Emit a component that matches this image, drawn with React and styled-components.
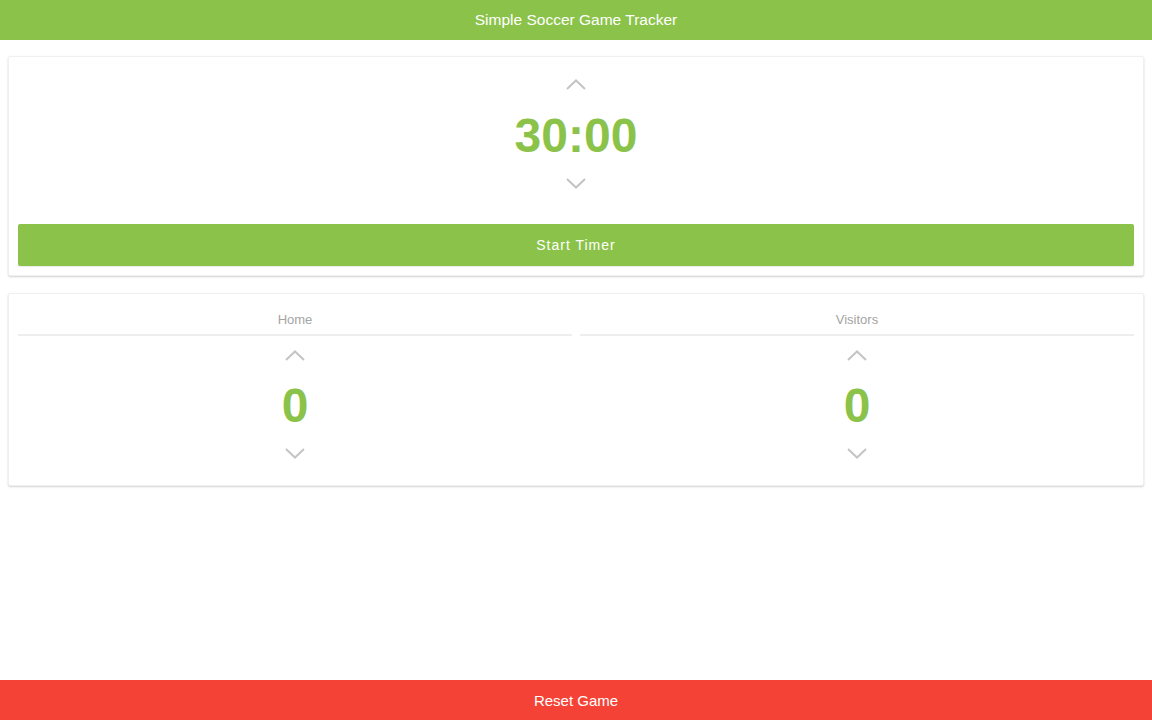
import React, { useState } from 'react';
import styled, { createGlobalStyle } from 'styled-components';

const GlobalStyle = createGlobalStyle`
  html, body {
    margin: 0;
    padding: 0;
    background: #fff;
    font-family: "Liberation Sans", Arial, sans-serif;
  }
`;

const Page = styled.div`
  display: flex;
  flex-direction: column;
  height: 720px;
  width: 1152px;
`;

const Header = styled.div`
  height: 40px;
  background-color: #8bc34a;
  color: #fff;
  display: flex;
  align-items: center;
  justify-content: center;
  font-size: 15.5px;
`;

const Content = styled.div`
  flex: 1;
  padding: 16px 8px 0;
  display: flex;
  flex-direction: column;
  gap: 17px;
`;

const Card = styled.div`
  background: #fff;
  border: 1px solid #f0f0f0;
  border-radius: 2px;
  box-shadow: 0 1px 2px rgba(0, 0, 0, 0.18);
  padding: 7px 9px ${props => props.bottom || 8}px;
`;

const ChevronButton = styled.div`
  height: ${props => props.h}px;
  display: flex;
  align-items: center;
  justify-content: center;
  cursor: pointer;
`;

const BigNumber = styled.div`
  color: #8bc34a;
  font-weight: bold;
  font-size: 48px;
  line-height: 64px;
  text-align: center;
`;

const StartButton = styled.button`
  display: block;
  width: 100%;
  height: 42px;
  margin-top: 26px;
  border: none;
  border-radius: 2px;
  background-color: #8bc34a;
  color: #fff;
  font-family: "Liberation Sans", Arial, sans-serif;
  font-size: 14px;
  letter-spacing: 1px;
  box-shadow: 0 1px 1px rgba(0, 0, 0, 0.08);
  cursor: pointer;
`;

const ScoreGrid = styled.div`
  display: grid;
  grid-template-columns: 1fr 1fr;
  gap: 8px;
`;

const TeamColumn = styled.div`
  display: flex;
  flex-direction: column;
`;

const TeamLabel = styled.div`
  color: #a4a4a4;
  font-size: 13px;
  line-height: 20px;
  text-align: center;
  padding: 9px 0 4px;
  border-bottom: 2px solid #eeeeee;
`;

const ResetBar = styled.button`
  height: 40px;
  border: none;
  background-color: #f44336;
  color: #fff;
  font-family: "Liberation Sans", Arial, sans-serif;
  font-size: 15px;
  cursor: pointer;
`;

const Chevron = ({ up }) => (
  <svg width="20" height="11" viewBox="0 0 20 11">
    <polyline
      points={up ? '1,10 10,1.5 19,10' : '1,1 10,9.5 19,1'}
      fill="none"
      stroke="#c4c4c4"
      strokeWidth="2"
    />
  </svg>
);

function Team({ name, score, onChange }) {
  return (
    <TeamColumn>
      <TeamLabel>{name}</TeamLabel>
      <ChevronButton h={38} onClick={() => onChange(score + 1)}>
        <Chevron up />
      </ChevronButton>
      <BigNumber>{score}</BigNumber>
      <ChevronButton h={30} onClick={() => onChange(Math.max(0, score - 1))}>
        <Chevron />
      </ChevronButton>
    </TeamColumn>
  );
}

export default function App() {
  const [minutes, setMinutes] = useState(30);
  const [home, setHome] = useState(0);
  const [visitors, setVisitors] = useState(0);

  const reset = () => {
    setMinutes(30);
    setHome(0);
    setVisitors(0);
  };

  return (
    <Page>
      <GlobalStyle />
      <Header>Simple Soccer Game Tracker</Header>
      <Content>
        <Card bottom={9}>
          <ChevronButton h={40} onClick={() => setMinutes(minutes + 1)}>
            <Chevron up />
          </ChevronButton>
          <BigNumber>{String(minutes).padStart(2, '0')}:00</BigNumber>
          <ChevronButton h={30} onClick={() => setMinutes(Math.max(1, minutes - 1))}>
            <Chevron />
          </ChevronButton>
          <StartButton>Start Timer</StartButton>
        </Card>
        <Card bottom={17}>
          <ScoreGrid>
            <Team name="Home" score={home} onChange={setHome} />
            <Team name="Visitors" score={visitors} onChange={setVisitors} />
          </ScoreGrid>
        </Card>
      </Content>
      <ResetBar onClick={reset}>Reset Game</ResetBar>
    </Page>
  );
}
